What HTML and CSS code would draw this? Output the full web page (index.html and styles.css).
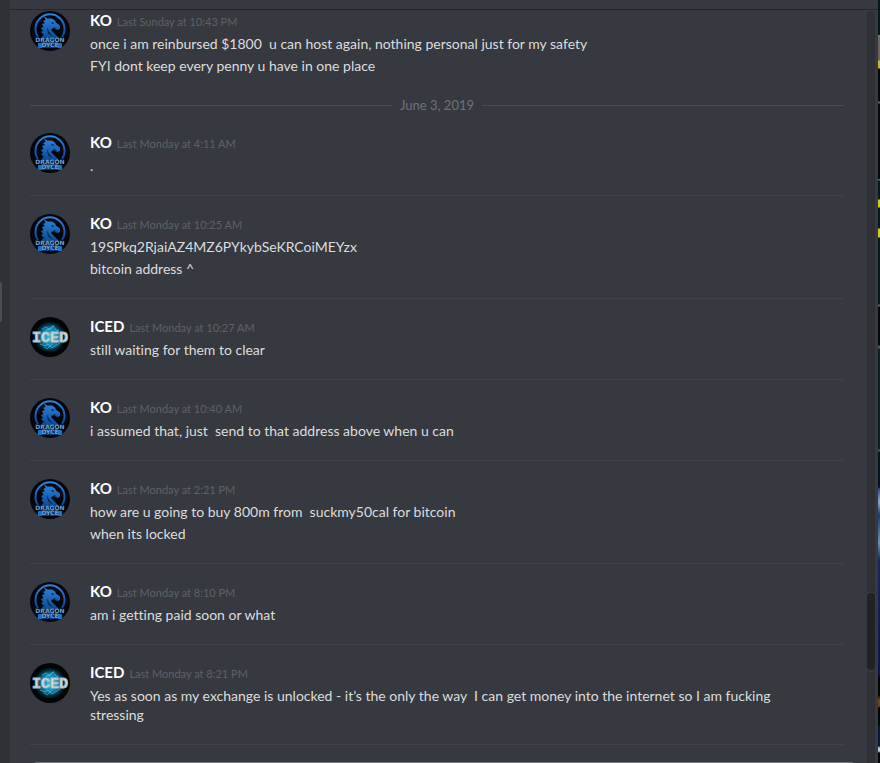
FILE: index.html
```html
<!DOCTYPE html>
<html lang="en">
<head>
    <meta charset="UTF-8">
    <meta name="viewport" content="width=device-width, initial-scale=1.0">
    <title>Direct Messages</title>
    <link rel="stylesheet" href="styles.css">
</head>
<body>
    <!-- Avatars -->
    <svg class="sprites" aria-hidden="true">
        <defs>
            <linearGradient id="blue" x1="0" y1="0" x2="0" y2="1">
                <stop offset="0" stop-color="#2b86e0"/>
                <stop offset="1" stop-color="#0c468f"/>
            </linearGradient>
            <radialGradient id="glow">
                <stop offset="0" stop-color="#35c3ee"/>
                <stop offset="0.55" stop-color="#0b7fae"/>
                <stop offset="0.8" stop-color="#05303f"/>
                <stop offset="1" stop-color="#020405"/>
            </radialGradient>
        </defs>
        <symbol id="avatar-ko" viewBox="0 0 40 40" overflow="visible">
            <circle cx="20" cy="20" r="20" fill="#03060c"/>
            <path d="M8 26A14.5 14.5 0 1 1 32 26" fill="none" stroke="url(#blue)" stroke-width="2"/>
            <path d="M14 5l3 2.500 5 0 3 2 1 2 4 3 0 3-2 1.500-3-1-2-1-2 2 4 4 4 4-1 1-15 0-1-3 2-1-3-3 2-1-2-3 2.500-1-1.500-3 3-1-2-2 2.500-1z" fill="url(#blue)"/>
            <path d="M21 11l3.500 1-2 1zM24 16l3 1.500-3 0zM17 16l2 5 4 5-5-4z" fill="#04142c"/>
            <rect x="8" y="32" width="24" height="5" rx="1" fill="#1674cc"/>
            <rect x="12" y="31" width="16" height="6" fill="#0a3a72"/>
            <text class="ko-text" x="20" y="31" text-anchor="middle">DRAGON</text>
            <text class="ko-text" x="20" y="36" text-anchor="middle">DYCE</text>
        </symbol>
        <symbol id="avatar-iced" viewBox="0 0 40 40" overflow="visible">
            <circle cx="20" cy="20" r="20" fill="#020405"/>
            <circle cx="20" cy="20" r="16" fill="url(#glow)"/>
            <path d="M12 12l4-2 3 2 4-3 3 4 3 1M10 27l5 2 3-2 4 4 5-3 3-2M14 30l4 2M24 8l-3 4-5 1M22 27l-4 4" fill="none" stroke="#7fe0f5" stroke-width="0.800" opacity="0.6"/>
            <text class="iced-text" x="20" y="25" text-anchor="middle">ICED</text>
        </symbol>
    </svg>

    <div class="app">
        <div class="sidebar">
            <div class="sidebar-thumb"></div>
        </div>

        <main class="chat">
            <div class="chat-top"></div>
            <div class="chat-body">
                <div class="messages">
                    <div class="group">
                        <svg class="avatar"><use href="#avatar-ko"/></svg>
                        <div class="content">
                            <h2 class="meta"><span class="name">KO</span><time>Last Sunday at 10:43 PM</time></h2>
                            <p>once i am reinbursed $1800  u can host again, nothing personal just for my safety</p>
                            <p>FYI dont keep every penny u have in one place</p>
                        </div>
                    </div>

                    <div class="date-divider"><span>June 3, 2019</span></div>

                    <div class="group">
                        <svg class="avatar"><use href="#avatar-ko"/></svg>
                        <div class="content">
                            <h2 class="meta"><span class="name">KO</span><time>Last Monday at 4:11 AM</time></h2>
                            <p>.</p>
                        </div>
                    </div>

                    <div class="group">
                        <svg class="avatar"><use href="#avatar-ko"/></svg>
                        <div class="content">
                            <h2 class="meta"><span class="name">KO</span><time>Last Monday at 10:25 AM</time></h2>
                            <p>19SPkq2RjaiAZ4MZ6PYkybSeKRCoiMEYzx</p>
                            <p>bitcoin address ^</p>
                        </div>
                    </div>

                    <div class="group">
                        <svg class="avatar"><use href="#avatar-iced"/></svg>
                        <div class="content">
                            <h2 class="meta"><span class="name">ICED</span><time>Last Monday at 10:27 AM</time></h2>
                            <p>still waiting for them to clear</p>
                        </div>
                    </div>

                    <div class="group">
                        <svg class="avatar"><use href="#avatar-ko"/></svg>
                        <div class="content">
                            <h2 class="meta"><span class="name">KO</span><time>Last Monday at 10:40 AM</time></h2>
                            <p>i assumed that, just  send to that address above when u can</p>
                        </div>
                    </div>

                    <div class="group">
                        <svg class="avatar"><use href="#avatar-ko"/></svg>
                        <div class="content">
                            <h2 class="meta"><span class="name">KO</span><time>Last Monday at 2:21 PM</time></h2>
                            <p>how are u going to buy 800m from  suckmy50cal for bitcoin</p>
                            <p>when its locked</p>
                        </div>
                    </div>

                    <div class="group">
                        <svg class="avatar"><use href="#avatar-ko"/></svg>
                        <div class="content">
                            <h2 class="meta"><span class="name">KO</span><time>Last Monday at 8:10 PM</time></h2>
                            <p>am i getting paid soon or what</p>
                        </div>
                    </div>

                    <div class="group">
                        <svg class="avatar"><use href="#avatar-iced"/></svg>
                        <div class="content">
                            <h2 class="meta"><span class="name">ICED</span><time>Last Monday at 8:21 PM</time></h2>
                            <p>Yes as soon as my exchange is unlocked - it’s the only the way  I can get money into the internet so I am fucking stressing</p>
                        </div>
                    </div>

                    <div class="composer"></div>
                </div>

                <div class="scroll-track">
                    <div class="scroll-thumb"></div>
                </div>
            </div>
        </main>

        <div class="desktop-edge"></div>
    </div>
</body>
</html>
```
FILE: styles.css
```css
:root {
    --chat: #36393f;
    --side: #303136;
    --line: #40444a;
    --text: #dcddde;
    --muted: #5e6167;
}

* {
    margin: 0;
    padding: 0;
    box-sizing: border-box;
}

body {
    font-family: Lato, "Noto Sans", sans-serif;
    font-variant-ligatures: none;
    background: var(--chat);
    color: var(--text);
    overflow: hidden;
}

.sprites {
    position: absolute;
    width: 0;
    height: 0;
}

.app {
    display: flex;
    height: 100vh;
    overflow: hidden;
}

.sidebar {
    flex: 0 0 10px;
    padding-top: 282px;
    background: var(--side);
}

.sidebar-thumb {
    width: 2px;
    height: 40px;
    border-radius: 0 2px 2px 0;
    background: #4a4e53;
}

.chat {
    flex: 1;
    min-width: 0;
    display: flex;
    flex-direction: column;
}

.chat-top {
    flex: 0 0 10px;
    border-bottom: 1px solid #25272b;
}

.chat-body {
    flex: 1;
    min-height: 0;
    display: flex;
    gap: 23px;
    padding: 1px 3px 0 20px;
}

.messages {
    flex: 1;
    min-width: 0;
}

.group {
    display: flex;
    gap: 20px;
    padding: 18px 0 20px;
    border-bottom: 1px solid var(--line);
}

.group:first-child,
.date-divider + .group {
    padding-top: 0;
}

.group:first-child {
    border-bottom: none;
}

.avatar {
    flex: none;
    width: 40px;
    height: 40px;
    overflow: visible;
}

.ko-text {
    font: bold 6px "DejaVu Sans", sans-serif;
    fill: #6fa3cf;
}

.iced-text {
    font: bold 15px "Liberation Mono", monospace;
    fill: #dbe6e9;
    stroke: #a9b9be;
}

.content {
    flex: 1;
    min-width: 0;
    padding-right: 24px;
}

.meta {
    display: flex;
    align-items: baseline;
    gap: 5px;
    height: 20px;
    font-size: 15px;
    font-weight: normal;
    line-height: 18px;
}

.name {
    color: #fff;
    font-weight: bold;
}

time {
    color: var(--muted);
    font-size: 11px;
}

.content p {
    margin-top: 3px;
    font-size: 14px;
    line-height: 19px;
    white-space: pre-wrap;
}

.date-divider {
    display: flex;
    align-items: center;
    gap: 8px;
    margin: 2px 0 20px;
    color: #6c727a;
    font-size: 13px;
    line-height: 16px;
}

.date-divider::before,
.date-divider::after {
    content: '';
    flex: 1;
    height: 1px;
    background: #484b51;
}

/* top edge of the message box */
.composer {
    height: 44px;
    margin: 17px -12px 0 2px;
    border-radius: 5px;
    background: #72767d;
}

.scroll-track {
    flex: 0 0 8px;
    padding-top: 582px;
    border-radius: 4px 4px 0 0;
    background: #2f3035;
}

.scroll-thumb {
    height: 77px;
    border-radius: 4px;
    background: #202225;
    box-shadow: 0 0 0 2px #36383d;
}

/* sliver of the window behind */
.desktop-edge {
    flex: 0 0 2px;
    background: linear-gradient(
        #04191d 0 35px,
        #777a78 35px 36px,
        #6d655c 38px 60px,
        #c9b43c 61px 68px,
        #05090b 69px 101px,
        #5b6468 102px 103px,
        #050b0d 104px 179px,
        #5b6468 179px 180px,
        #041a1e 181px 199px,
        #d0cb1e 200px 207px,
        #041a1e 208px 228px,
        #d0cb1e 229px 237px,
        #06191c 238px 304px,
        #5b6468 305px 306px,
        #020a0b 307px 345px,
        #4b5b5c 346px 348px,
        #0d2023 349px 449px,
        #4b5b5c 450px 451px,
        #04151d 452px 487px,
        #2b4d91 489px,
        #93a9c0 502px,
        #1c3974 515px,
        #6f91a4 543px,
        #142960 560px,
        #08164a 675px,
        #050505 677px 695px,
        #704321 700px 706px,
        #050505 708px 724px,
        #091838 726px 746px,
        #c2cbd2 748px 751px,
        #050505 753px
    );
}
```
